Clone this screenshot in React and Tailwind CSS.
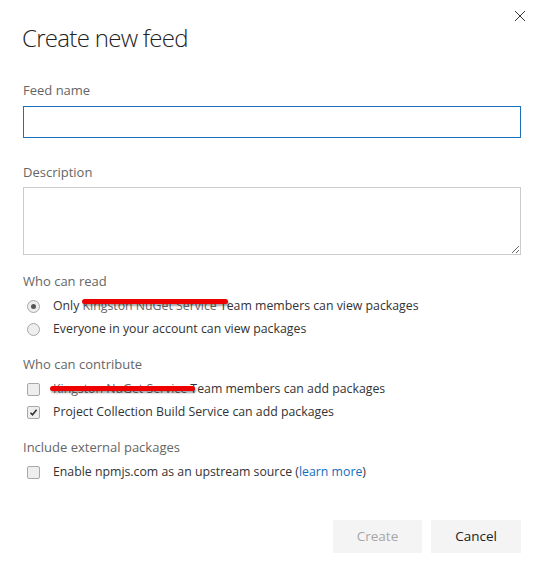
import React from "react";

const font = { fontFamily: '"Open Sans", "Noto Sans", Arial, sans-serif' };

function Radio({ checked }) {
  return (
    <span className="flex h-[13px] w-[13px] shrink-0 items-center justify-center rounded-full border border-[#a8a8a8] bg-[#eeeeee]">
      {checked && <span className="h-[5px] w-[5px] rounded-full bg-[#555]" />}
    </span>
  );
}

function Check({ checked }) {
  return (
    <span className="flex h-[13px] w-[13px] shrink-0 items-center justify-center rounded-[2px] border border-[#a8a8a8] bg-[#eeeeee]">
      {checked && (
        <svg width="9" height="9" viewBox="0 0 9 9">
          <path d="M1.5 4.8 L3.5 6.8 L7.6 1.8" fill="none" stroke="#333" strokeWidth="1.6" />
        </svg>
      )}
    </span>
  );
}

function Strike({ className }) {
  return (
    <span
      className={
        "pointer-events-none absolute h-[5px] rounded-full bg-[#ee0000] shadow-[1px_2px_2px_rgba(0,0,0,0.35)] " +
        className
      }
    />
  );
}

export default function App() {
  return (
    <div className="relative h-[576px] w-[544px] bg-white text-[#333]" style={font}>
      <button className="absolute right-[17px] top-[9px] flex h-[14px] w-[14px] items-center justify-center">
        <svg width="12" height="12" viewBox="0 0 12 12">
          <path d="M1 1 L11 11 M11 1 L1 11" stroke="#333" strokeWidth="1" />
        </svg>
      </button>
      <div className="flex flex-col px-[23px] pt-[22px]">
        <h1 className="-ml-[1px] text-[24px] font-light leading-[32px] tracking-[-0.7px] text-[#222]">Create new feed</h1>

        <label className="mt-[27px] text-[13px] leading-[18px] text-[#666]">Feed name</label>
        <input className="mt-[7px] h-[32px] w-[498px] border border-[#1a6fb8] px-2 text-[13px] outline-none" />

        <label className="mt-[25px] text-[13px] leading-[18px] text-[#666]">Description</label>
        <textarea className="mt-[6px] h-[68px] w-[498px] resize-y border border-[#cccccc] px-2 text-[13px] outline-none" />

        <div className="mt-[17px] text-[13px] leading-[18px] text-[#666]">Who can read</div>
        <div className="mt-[7px] flex flex-col gap-[5px] text-[12.3px] leading-[18px]">
          <div className="flex items-center gap-[13px] pl-[4px]">
            <Radio checked />
            <span className="relative">
              Only <span className="text-[#666]">Kingston NuGet Service</span> Team members can view packages
              <Strike className="left-[29px] top-[2px] w-[146px]" />
            </span>
          </div>
          <div className="flex items-center gap-[13px] pl-[4px]">
            <Radio />
            <span>Everyone in your account can view packages</span>
          </div>
        </div>

        <div className="mt-[17px] text-[13px] leading-[18px] text-[#666]">Who can contribute</div>
        <div className="mt-[7px] flex flex-col gap-[5px] text-[12.3px] leading-[18px]">
          <div className="flex items-center gap-[13px] pl-[4px]">
            <Check />
            <span className="relative">
              <span className="text-[#666]">Kingston NuGet Service</span> Team members can add packages
              <Strike className="-left-[3px] top-[6px] w-[145px]" />
            </span>
          </div>
          <div className="flex items-center gap-[13px] pl-[4px]">
            <Check checked />
            <span>Project Collection Build Service can add packages</span>
          </div>
        </div>

        <div className="mt-[17px] text-[13px] leading-[18px] text-[#666]">Include external packages</div>
        <div className="mt-[7px] flex items-center gap-[13px] pl-[4px] text-[12.3px] leading-[18px]">
          <Check />
          <span>
            Enable npmjs.com as an upstream source (<span className="text-[#106ebe]">learn more</span>)
          </span>
        </div>

        <div className="mt-[39px] flex justify-end gap-[9px]">
          <button className="h-[33px] w-[89px] bg-[#f4f4f4] text-[13.5px] text-[#a6a6a6]">Create</button>
          <button className="h-[33px] w-[90px] bg-[#f4f4f4] text-[13.5px] text-[#222]">Cancel</button>
        </div>
      </div>
    </div>
  );
}
